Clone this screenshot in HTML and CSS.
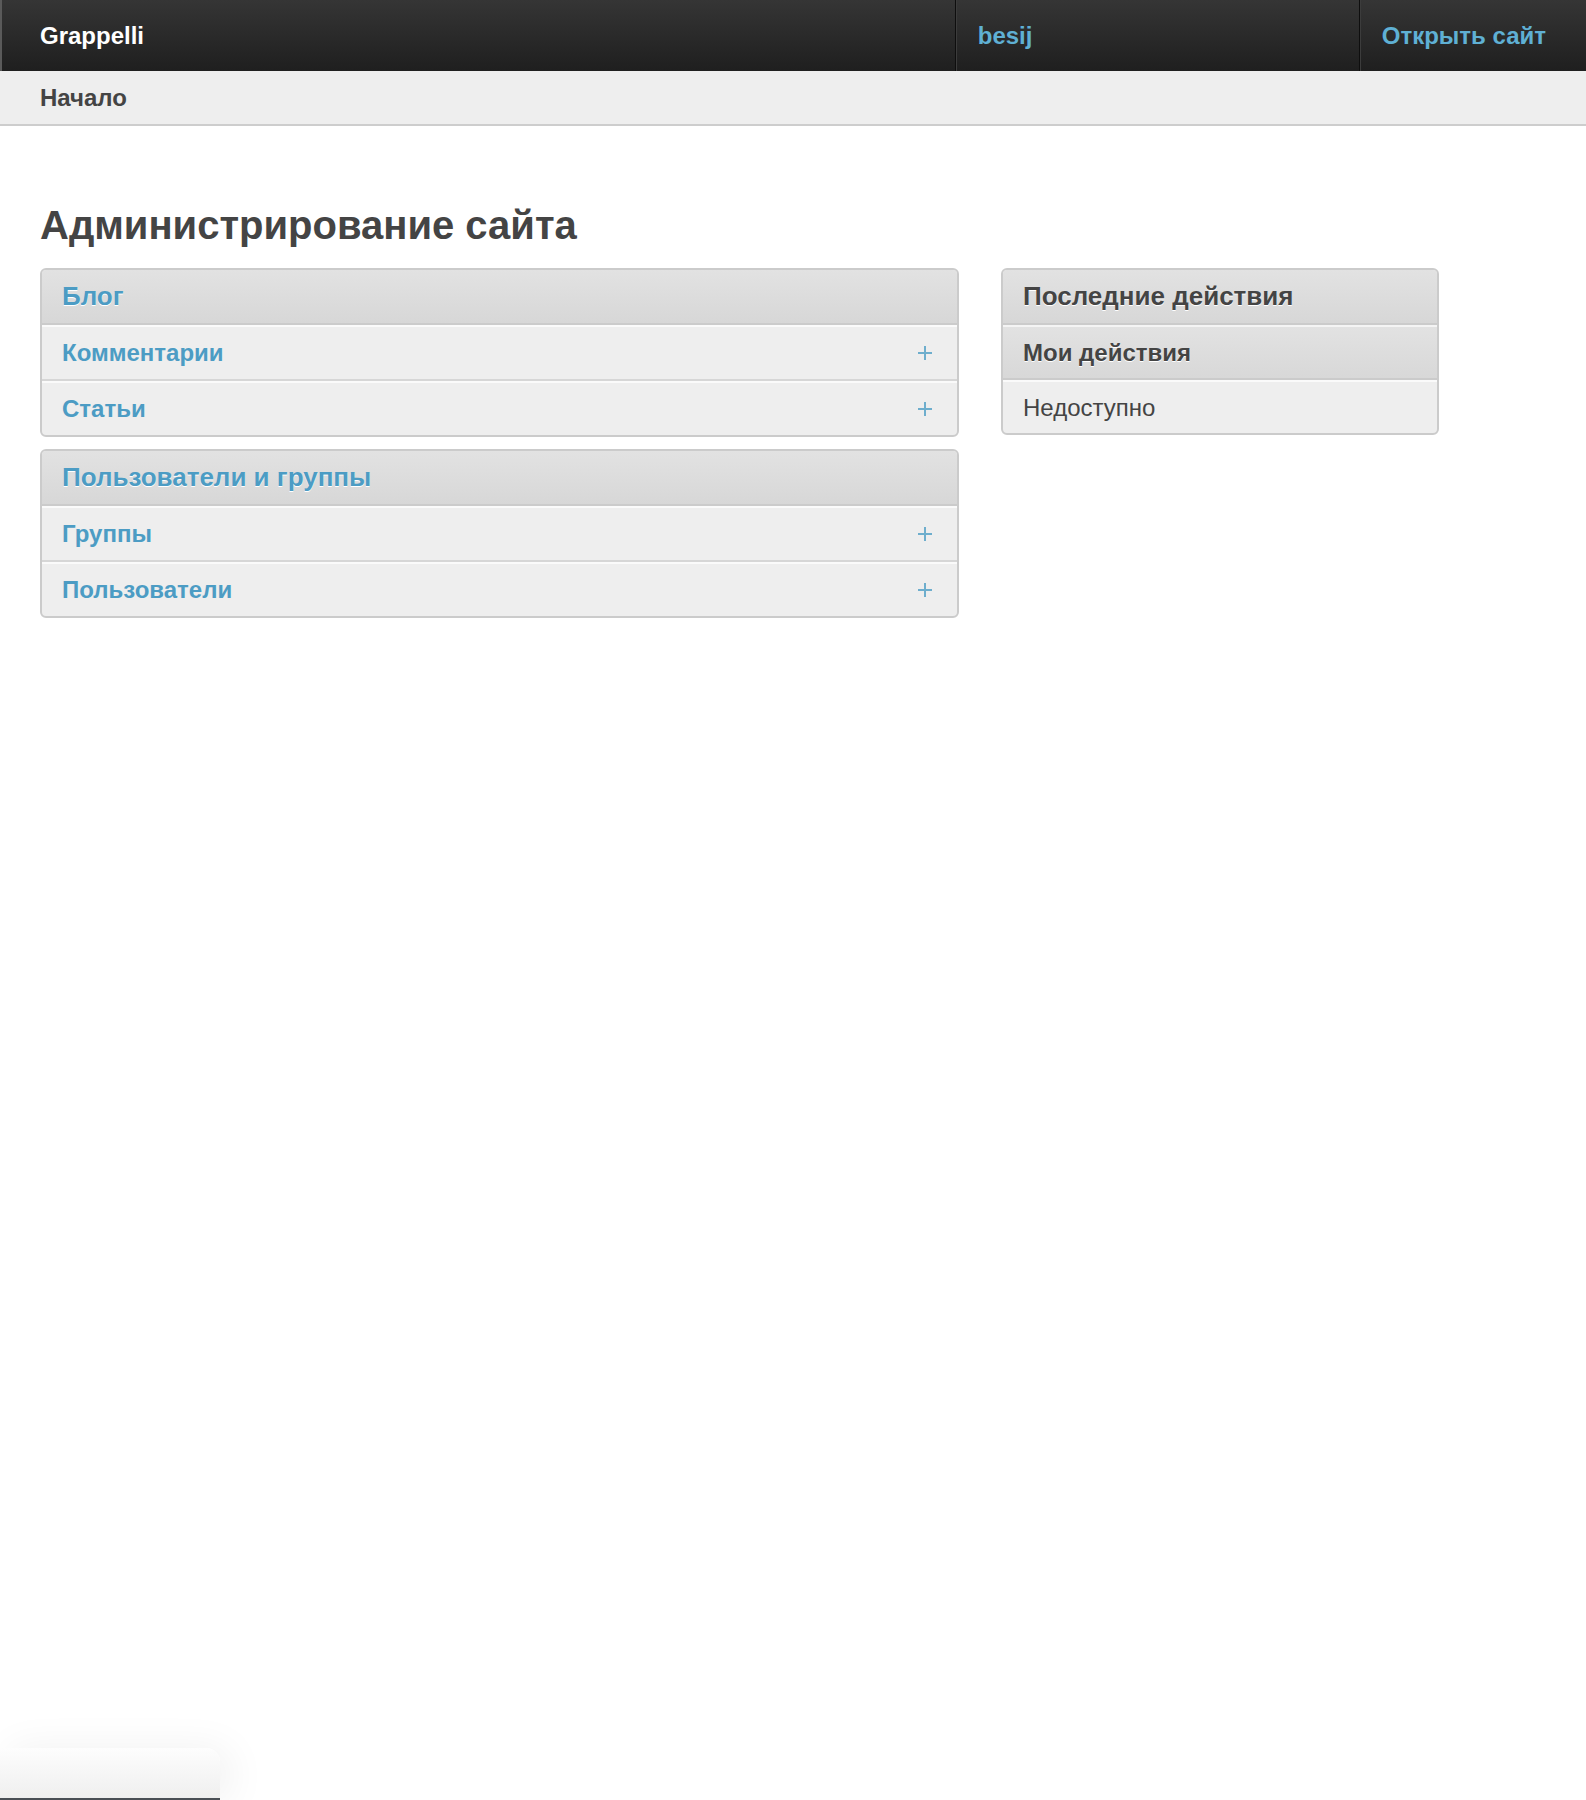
FILE: index.html
```html
<!DOCTYPE html>
<html lang="ru">
<head>
<meta charset="utf-8">
<title>Администрирование сайта | Grappelli</title>
<link rel="stylesheet" href="styles.css">
</head>
<body>
<header class="topbar">
  <div class="brand">Grappelli</div>
  <div class="user"><a href="#">besij</a></div>
  <div class="site"><a href="#">Открыть сайт</a></div>
</header>
<nav class="crumbs"><span>Начало</span></nav>
<main class="content">
  <h1 class="title">Администрирование сайта</h1>
  <div class="columns">
    <div class="col-main">
      <section class="module">
        <h2 class="mod-head"><a href="#">Блог</a></h2>
        <div class="row"><a href="#">Комментарии</a><span class="add"><svg width="16" height="16" viewBox="0 0 16 16"><path d="M8 1v14M1 8h14" stroke="#6eaecd" stroke-width="2" fill="none"/></svg></span></div>
        <div class="row last"><a href="#">Статьи</a><span class="add"><svg width="16" height="16" viewBox="0 0 16 16"><path d="M8 1v14M1 8h14" stroke="#6eaecd" stroke-width="2" fill="none"/></svg></span></div>
      </section>
      <section class="module">
        <h2 class="mod-head"><a href="#">Пользователи и группы</a></h2>
        <div class="row"><a href="#">Группы</a><span class="add"><svg width="16" height="16" viewBox="0 0 16 16"><path d="M8 1v14M1 8h14" stroke="#6eaecd" stroke-width="2" fill="none"/></svg></span></div>
        <div class="row last"><a href="#">Пользователи</a><span class="add"><svg width="16" height="16" viewBox="0 0 16 16"><path d="M8 1v14M1 8h14" stroke="#6eaecd" stroke-width="2" fill="none"/></svg></span></div>
      </section>
    </div>
    <aside class="col-side">
      <section class="module side">
        <h2 class="mod-head dark">Последние действия</h2>
        <h3 class="sub-head">Мои действия</h3>
        <div class="row plain last">Недоступно</div>
      </section>
    </aside>
  </div>
</main>
<div class="status-bubble"></div>
</body>
</html>
```
FILE: styles.css
```css
html, body {
  margin: 0;
  padding: 0;
  background: #fff;
}
body {
  font-family: "Liberation Sans", Arial, Helvetica, sans-serif;
  color: #444;
  min-height: 1800px;
}
a { text-decoration: none; }

.topbar {
  display: flex;
  height: 71px;
  background: linear-gradient(#353535, #1f1f1f);
  border-left: 2px solid #5a5a5a;
  box-sizing: border-box;
}
.brand {
  flex: 1;
  display: flex;
  align-items: center;
  padding-left: 38px;
  color: #fff;
  font-weight: bold;
  font-size: 24px;
}
.user, .site {
  display: flex;
  align-items: center;
  border-left: 1px solid #0e0e0e;
  box-shadow: inset 1px 0 0 #3c3c3c;
  font-weight: bold;
  font-size: 24px;
}
.user {
  width: 404px;
  box-sizing: border-box;
  padding-left: 22px;
}
.site {
  padding: 0 40px 0 22px;
}
.user a, .site a { color: #5fb0d4; }

.crumbs {
  height: 53px;
  background: #eee;
  border-bottom: 2px solid #cdcdcd;
  display: flex;
  align-items: center;
  padding-left: 40px;
  font-weight: bold;
  font-size: 24px;
  color: #444;
}

.content {
  padding: 0 40px;
}
.title {
  margin: 0;
  padding-top: 79px;
  font-size: 40px;
  line-height: 40px;
  color: #444;
  font-weight: bold;
}
.columns {
  display: flex;
  gap: 42px;
  align-items: flex-start;
  padding-top: 23px;
}
.col-main {
  width: 919px;
  display: flex;
  flex-direction: column;
  gap: 12px;
}
.col-side {
  width: 438px;
}

.module {
  border: 2px solid #cbcbcb;
  border-radius: 6px;
  overflow: hidden;
  background: #eee;
}
.mod-head {
  margin: 0;
  height: 53px;
  display: flex;
  align-items: center;
  padding-left: 20px;
  background: linear-gradient(#e2e2e2, #d7d7d7);
  border-bottom: 2px solid #cbcbcb;
  font-size: 26px;
  font-weight: bold;
  text-shadow: 0 1px 0 #fff;
}
.mod-head a { color: #4c9cc4; }
.mod-head.dark { color: #444; }

.sub-head {
  margin: 0;
  height: 51px;
  display: flex;
  align-items: center;
  padding-left: 20px;
  background: linear-gradient(#e2e2e2, #d8d8d8);
  border-top: 2px solid #f4f4f4;
  border-bottom: 2px solid #cbcbcb;
  font-size: 24px;
  font-weight: bold;
  color: #444;
  text-shadow: 0 1px 0 #fff;
}

.row {
  height: 52px;
  display: flex;
  align-items: center;
  justify-content: space-between;
  padding: 0 24px 0 20px;
  border-top: 2px solid #fafafa;
  border-bottom: 2px solid #d6d6d6;
  font-size: 24px;
  font-weight: bold;
}
.row.last { border-bottom: none; }
.row a { color: #4c9cc4; }
.add {
  display: flex;
  width: 16px;
  height: 16px;
}
.row.plain {
  height: 51px;
  font-weight: normal;
  color: #444;
}

.status-bubble {
  position: fixed;
  left: 0;
  bottom: 0;
  width: 220px;
  height: 50px;
  background: linear-gradient(#fdfdfd, #efefef);
  border-top-right-radius: 14px;
  border-bottom: 2px solid #4a4f55;
  box-shadow: 10px 0 40px rgba(0, 0, 0, 0.06);
}
```
